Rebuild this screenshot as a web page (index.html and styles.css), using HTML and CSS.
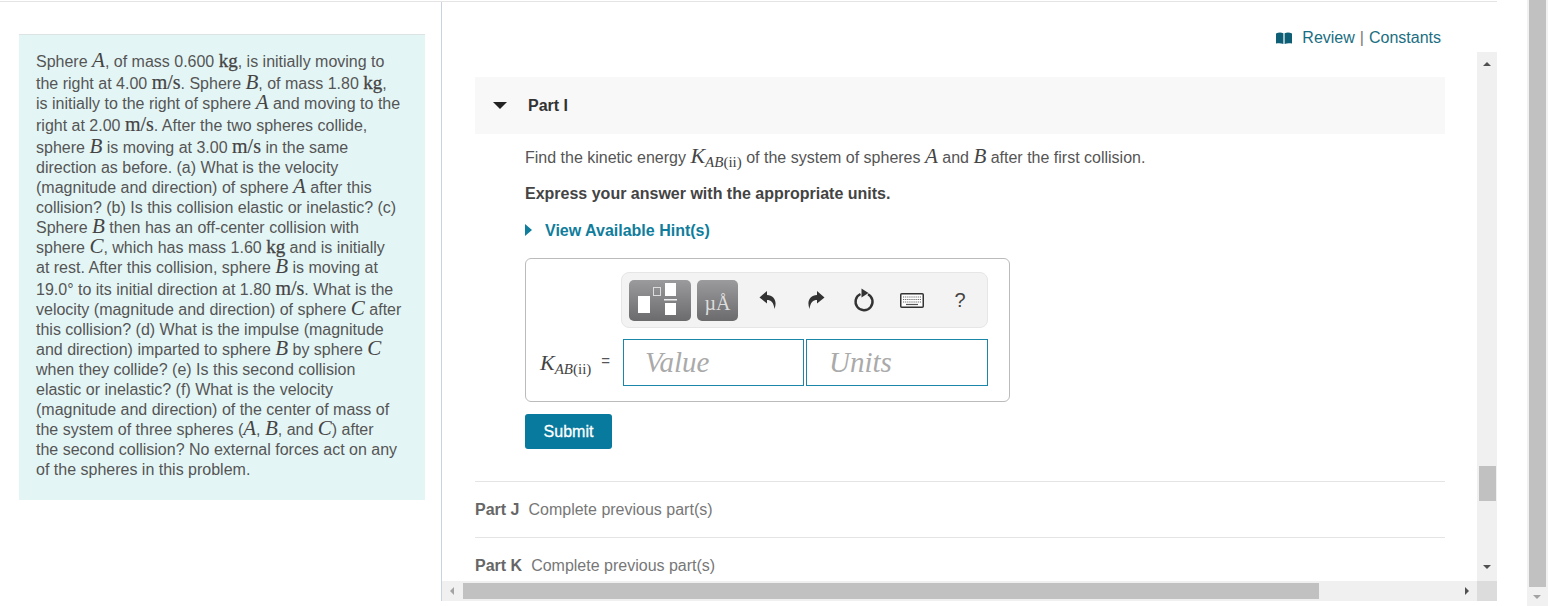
FILE: index.html
```html
<!DOCTYPE html>
<html lang="en">
<head>
    <meta charset="UTF-8">
    <meta name="viewport" content="width=device-width, initial-scale=1.0">
    <title>Part I</title>
    <link rel="stylesheet" href="styles.css">
</head>
<body>
    <div class="app">
        <aside class="left-col">
            <div class="intro">
                Sphere <i class="m">A</i>, of mass 0.600 <b class="m">kg</b>, is initially moving to<br>
                the right at 4.00 <span class="unit">m/s</span>. Sphere <i class="m">B</i>, of mass 1.80 <b class="m">kg</b>,<br>
                is initially to the right of sphere <i class="m">A</i> and moving to the<br>
                right at 2.00 <span class="unit">m/s</span>. After the two spheres collide,<br>
                sphere <i class="m">B</i> is moving at 3.00 <span class="unit">m/s</span> in the same<br>
                direction as before. (a) What is the velocity<br>
                (magnitude and direction) of sphere <i class="m">A</i> after this<br>
                collision? (b) Is this collision elastic or inelastic? (c)<br>
                Sphere <i class="m">B</i> then has an off-center collision with<br>
                sphere <i class="m">C</i>, which has mass 1.60 <b class="m">kg</b> and is initially<br>
                at rest. After this collision, sphere <i class="m">B</i> is moving at<br>
                19.0&deg; to its initial direction at 1.80 <span class="unit">m/s</span>. What is the<br>
                velocity (magnitude and direction) of sphere <i class="m">C</i> after<br>
                this collision? (d) What is the impulse (magnitude<br>
                and direction) imparted to sphere <i class="m">B</i> by sphere <i class="m">C</i><br>
                when they collide? (e) Is this second collision<br>
                elastic or inelastic? (f) What is the velocity<br>
                (magnitude and direction) of the center of mass of<br>
                the system of three spheres (<i class="m">A</i>, <i class="m">B</i>, and <i class="m">C</i>) after<br>
                the second collision? No external forces act on any<br>
                of the spheres in this problem.
            </div>
        </aside>

        <section class="right-col">
            <div class="review-bar">
                <svg class="book" viewBox="0 0 16 12" width="16" height="12"><path d="M0 1.5 C2.5 .3 5 .3 7.4 1.2 V12 C5 11 2.5 11 0 11.6 Z M8.6 1.2 C11 .3 13.5 .3 16 1.5 V11.6 C13.500 11 11 11 8.6 12 Z" fill="#0e5f76"/></svg>
                <a class="review-link">Review</a><span class="sep">|</span><a class="review-link">Constants</a>
            </div>

            <div class="pane">
                <div class="scroller">
                    <div class="part-head">
                        <span class="caret-down"></span>
                        <h2>Part I</h2>
                    </div>
                    <div class="part-body">
                        <p class="question">Find the kinetic energy <span class="kvar"><i>K</i><sub><i>AB</i>(ii)</sub></span> of the system of spheres <i class="m">A</i> and <i class="m">B</i> after the first collision.</p>
                        <p class="express">Express your answer with the appropriate units.</p>
                        <a class="hint"><span class="caret-right"></span>View Available Hint(s)</a>

                        <div class="answer-box">
                            <div class="toolbar">
                                <div class="tool-btn btn-template">
                                    <svg viewBox="0 0 62 41" width="62" height="41">
                                        <rect x="9" y="16" width="12" height="17" fill="#fff"/>
                                        <rect x="24.500" y="7.500" width="7" height="8" fill="none" stroke="#ddd"/>
                                        <rect x="36" y="3" width="11" height="13" fill="#fff"/>
                                        <rect x="35" y="19" width="13" height="1.500" fill="#eee"/>
                                        <rect x="36" y="23" width="11" height="12" fill="#fff"/>
                                    </svg>
                                </div>
                                <div class="tool-btn btn-units">&micro;&Aring;</div>
                                <div class="tool"><svg viewBox="0 0 18 20" width="18" height="20"><path d="M8 1 L0.500 7.500 L8 13.500 V10 C12 10 14.500 12 15.500 19 C18.500 11 15 5.500 8 5 Z" fill="#333"/></svg></div>
                                <div class="tool"><svg viewBox="0 0 18 20" width="18" height="20"><path d="M10 1 L17.500 7.500 L10 13.500 V10 C6 10 3.500 12 2.500 19 C-.5 11 3 5.500 10 5 Z" fill="#333"/></svg></div>
                                <div class="tool"><svg viewBox="0 0 22 24" width="22" height="24"><path d="M7.500 6 A8.500 8.500 0 1 0 15 6.200" fill="none" stroke="#333" stroke-width="2.400"/><path d="M8.500 .5 L15.500 5 L8.500 9.500 Z" fill="#333"/></svg></div>
                                <div class="tool">
                                    <svg viewBox="0 0 24 15" width="24" height="15">
                                        <rect x=".75" y=".75" width="22.500" height="13.500" rx="1" fill="#fff" stroke="#333" stroke-width="1.500"/>
                                        <path d="M3 4 H21 M3 6.500 H21 M3 9 H21" stroke="#666" stroke-width="1.200" stroke-dasharray="1.200 .9"/>
                                        <path d="M6 11.500 H18" stroke="#555" stroke-width="1.200"/>
                                    </svg>
                                </div>
                                <div class="tool tool-help">?</div>
                            </div>
                            <div class="answer-row">
                                <div class="answer-label"><span class="kvar"><i>K</i><sub><i>AB</i>(ii)</sub></span><span class="eq">=</span></div>
                                <div class="field field-value">Value</div>
                                <div class="field field-units">Units</div>
                            </div>
                        </div>

                        <button class="submit">Submit</button>
                    </div>

                    <div class="part-row"><b>Part J</b><span>Complete previous part(s)</span></div>
                    <div class="part-row"><b>Part K</b><span>Complete previous part(s)</span></div>
                </div>

                <div class="vbar">
                    <span class="arr arr-up"></span>
                    <div class="vbar-thumb"></div>
                    <span class="arr arr-down"></span>
                </div>
                <div class="hbar">
                    <span class="arr arr-left"></span>
                    <div class="hbar-thumb"></div>
                    <span class="arr arr-right"></span>
                </div>
                <div class="corner"></div>
            </div>
        </section>
    </div>

    <div class="page-bar">
        <div class="page-thumb"></div>
        <span class="arr arr-page"></span>
    </div>
</body>
</html>
```

FILE: styles.css
```css
* { margin: 0; padding: 0; box-sizing: border-box; }
html, body { height: 606px; overflow: hidden; }
body { background: #fff; color: #555; font-family: "Liberation Sans", Arial, sans-serif; font-size: 16px; display: flex; justify-content: space-between; }

.app { width: 1497px; height: 600px; margin-top: 1px; border-top: 1px solid #e4e4e4; display: flex; }

/* left column */
.left-col { width: 442px; flex: none; border-right: 1px solid #c9d2e2; padding: 32px 0 0 19px; }
.intro { width: 406px; height: 466px; background: #e4f5f5; border-top: 1px solid #dde2e2; padding: 17px 0 0 17px; line-height: 20px; white-space: nowrap; color: #555; }
.m { font-family: "Liberation Serif", "Times New Roman", serif; font-size: 21px; line-height: 16px; color: #444; }
b.m { font-weight: bold; font-size: 19px; font-weight: normal; -webkit-text-stroke: .3px #444; }
.unit { display: inline-block; padding-bottom: 2px; font-family: "Liberation Serif", "Times New Roman", serif; font-size: 20px; line-height: 20px; color: #444; -webkit-text-stroke: .2px #444; }

/* right column */
.right-col { flex: 1; min-width: 0; display: flex; flex-direction: column; }
.review-bar { height: 50px; flex: none; display: flex; align-items: center; justify-content: flex-end; padding: 21px 56px 0 0; color: #1a6e82; }
.book { margin-right: 10px; }
.sep { color: #777; margin: 0 5px; }

.pane { flex: 1; min-height: 0; display: grid; grid-template-columns: 1fr 20px; grid-template-rows: 1fr 20px; }
.scroller { overflow: hidden; padding: 25px 32px 0 33px; }

.part-head { height: 57px; background: #f8f8f8; display: flex; align-items: center; }
.caret-down { width: 0; height: 0; margin: 0 21px 0 18px; border-left: 7px solid transparent; border-right: 7px solid transparent; border-top: 7px solid #222; }
.part-head h2 { font-size: 16px; font-weight: bold; color: #333; }

.part-body { padding-left: 50px; }
.question { height: 24px; line-height: 24px; margin-top: 12px; white-space: nowrap; }
.kvar { font-family: "Liberation Serif", "Times New Roman", serif; font-size: 22px; line-height: 20px; color: #444; }
.kvar sub { font-size: 15px; line-height: 0; vertical-align: -4px; }
.express { margin-top: 14px; line-height: 20px; font-weight: bold; color: #444; }
.hint { display: flex; align-items: center; margin-top: 17px; line-height: 20px; font-weight: bold; color: #0f7d9c; }
.caret-right { width: 0; height: 0; margin: -3px 13px 0 0; border-top: 6px solid transparent; border-bottom: 6px solid transparent; border-left: 7px solid #0f7d9c; }

.answer-box { width: 485px; height: 144px; margin-top: 17px; border: 1px solid #bbb; border-radius: 6px; padding: 13px 21px 0 14px; }
.toolbar { width: 367px; height: 56px; margin-left: 81px; background: #f3f3f3; border: 1px solid #e6e6e6; border-radius: 8px; padding: 7px; display: flex; align-items: center; }
.tool-btn { height: 41px; border-radius: 5px; background: linear-gradient(#9b9a9c, #6b6a6c); flex: none; }
.btn-template { width: 62px; margin-right: 6px; }
.btn-units { width: 41px; margin-right: 6px; font-family: "Liberation Serif", "Times New Roman", serif; font-size: 20px; line-height: 46px; text-align: center; color: #ddd; }
.tool { width: 48px; flex: none; display: flex; align-items: center; justify-content: center; }
.tool-help { font-size: 20px; color: #444; }

.answer-row { display: flex; align-items: center; gap: 2px; margin-top: 11px; }
.answer-label { width: 81px; display: flex; align-items: center; justify-content: space-between; padding-right: 11px; }
.eq { font-size: 15px; margin-top: -5px; }
.field { height: 47px; border: 1px solid #1a87a8; font-family: "Liberation Serif", "Times New Roman", serif; font-style: italic; font-size: 29px; line-height: 45px; color: #aaa; }
.field-value { width: 181px; padding-left: 21px; }
.field-units { width: 182px; padding-left: 22px; }

.submit { display: block; width: 87px; height: 35px; margin-top: 12px; background: #077a9e; border: none; border-radius: 3px; color: #fff; font-family: "Liberation Sans", Arial, sans-serif; font-size: 16px; -webkit-text-stroke: .3px #fff; }

.part-row { height: 56px; border-top: 1px solid #e4e4e4; display: flex; align-items: center; gap: 9px; color: #777; padding-top: 1px; }
.part-row:first-of-type { margin-top: 32px; }
.part-row b { color: #666; }
.submit + .part-row { margin-top: 32px; }
.part-body + .part-row { margin-top: 32px; }

/* fake scrollbars */
.vbar { background: #f0f0f0; position: relative; }
.vbar-thumb { position: absolute; left: 2px; right: 1px; top: 414px; height: 35px; background: #c1c1c1; }
.hbar { background: #f0f0f0; position: relative; }
.hbar-thumb { position: absolute; left: 21px; top: 2px; width: 856px; height: 16px; background: #c1c1c1; }
.corner { background: #dcdcdc; }

.arr { position: absolute; width: 0; height: 0; }
.arr-up { left: 6px; top: 10px; border-left: 4px solid transparent; border-right: 4px solid transparent; border-bottom: 4px solid #505050; }
.arr-down { left: 6px; top: 513px; border-left: 4px solid transparent; border-right: 4px solid transparent; border-top: 4px solid #505050; }
.arr-left { left: 8px; top: 6px; border-top: 4px solid transparent; border-bottom: 4px solid transparent; border-right: 4px solid #a3a3a3; }
.arr-right { right: 8px; top: 6px; border-top: 4px solid transparent; border-bottom: 4px solid transparent; border-left: 4px solid #505050; }

.page-bar { width: 21px; height: 606px; flex: none; background: #f1f1f1; padding: 0 2px 0 2px; position: relative; }
.page-thumb { height: 587px; background: #c1c1c1; }
.arr-page { left: 6px; top: 595px; border-left: 4px solid transparent; border-right: 4px solid transparent; border-top: 4px solid #a3a3a3; }
```
